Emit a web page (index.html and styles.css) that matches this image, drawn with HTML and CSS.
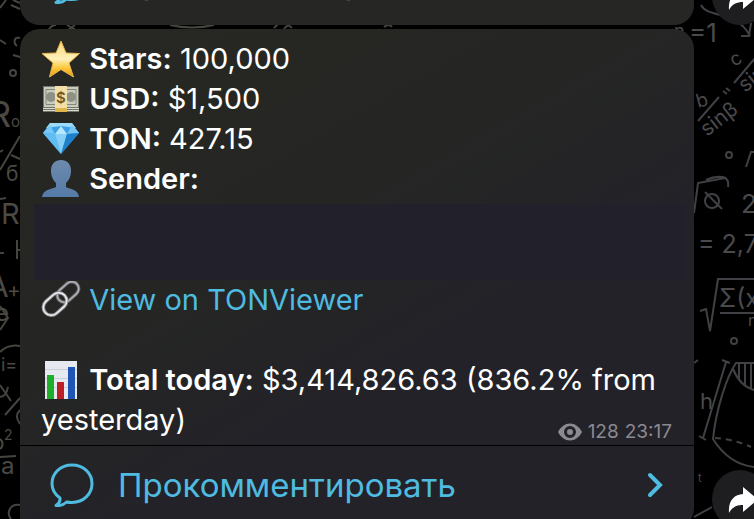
FILE: index.html
```html
<!DOCTYPE html>
<html lang="ru">
<head>
    <meta charset="UTF-8">
    <meta name="viewport" content="width=device-width, initial-scale=1.0">
    <title>Channel</title>
    <link rel="stylesheet" href="styles.css">
</head>
<body>
    <!-- wallpaper -->
    <svg class="doodles doodles-left" width="420" height="519" viewBox="0 0 420 519" aria-hidden="true">
        <path d="M0 8L6 0M11 5l9 4M13 0l7 3M0 40l6 4M20 38c-6-2-7 5-3 8M13 55l7 2M49 29q3-4 7-4M67 25l9 5M75 25l-7 5"/>
        <path d="M170 25q22 5 44 0M274 28l4-4M284 29q4-6 8-1M384 27q5-4 8 0"/>
        <circle cx="13" cy="73" r="3"/>
        <path d="M0 170L20 136M11 155l9 4M0 152l3-2M0 199l6-1M0 253h4M17 240v19M17 250h4"/>
        <path d="M0 330l8-12-8-12M0 352q8-8 20-6M0 385l11 16M0 397q6 0 8-10M5 415l15-17M20 410q-6 6 0 14M0 457l16-1"/>
        <path d="M20 505c-10-2-14 8-9 14"/>
        <text x="-12" y="127" font-size="36">R</text>
        <text x="11" y="127" font-size="15">o</text>
        <text x="6" y="181" font-size="21">б</text>
        <text x="1" y="224" font-size="29">R</text>
        <text x="-12" y="297" font-size="30">A</text>
        <text x="7" y="297" font-size="21">+</text>
        <text x="-5" y="321" font-size="24">e</text>
        <text x="1" y="371" font-size="18">i=</text>
        <text x="-9" y="450" font-size="22">b</text>
        <text x="4" y="440" font-size="14">2</text>
        <text x="1" y="474" font-size="24">a</text>
    </svg>
    <svg class="doodles doodles-right" width="80" height="519" viewBox="674 0 80 519" aria-hidden="true">
        <path d="M701 5c7 14 35 4 49 31M741 36l8 0 2-13M734 83l22-26M698 121l21-24M723 91l4 3M726 88l4 3M746 167l5-15h4M706 180q11-5 20-2"/>
        <path d="M694 213l4-30 27-5q4 2 3 9M700 311l6-2 4 22 8-52h36M720 313h34"/>
        <circle cx="729" cy="155" r="3"/>
        <circle cx="734" cy="341" r="3"/>
        <path d="M722 360l8 3M726 362l-23 76M699 436l7 4M754 363h-18c-9 13-20 46-23 76 10 16 24 26 41 28M733 369q7 17 21 21M739 363v16M745 363v22M751 363v26"/>
        <path stroke-dasharray="6 5" d="M715 438q18 1 36 9"/>
        <path d="M694 517l18-10M694 363l4-3"/>
        <circle cx="712" cy="201" r="7"/>
        <path d="M705 192l17 17"/>
        <text x="674" y="37" font-size="18">n</text>
        <text x="689" y="42" font-size="26">=1</text>
        <text x="698" y="108" font-size="19" transform="rotate(-15 698 108)">b</text>
        <text x="707" y="137" font-size="21" transform="rotate(-38 707 137)">sinβ</text>
        <text x="734" y="67" font-size="19" transform="rotate(-30 734 67)">c</text>
        <text x="745" y="93" font-size="21" transform="rotate(-38 745 93)">sin</text>
        <text x="741" y="213" font-size="26">2</text>
        <text x="698" y="253" font-size="25">= 2,7</text>
        <text x="719" y="307" font-size="25">Σ(x</text>
        <text x="748" y="326" font-size="16">n</text>
        <text x="700" y="409" font-size="22">h</text>
        <text x="698" y="482" font-size="11">t</text>
    </svg>

    <main class="chat">
        <div class="row">
            <article class="bubble">
                <a href="#comments-prev" class="comments">
                    <svg class="comments-icon" width="46" height="44" viewBox="0 0 46 44" aria-hidden="true">
                        <path d="M23 2C11.500 2 3 10 3 20.500c0 6 3 11 8 14.500.500 3-1 5.500-4 7.500 5 .500 8-1 10.500-3.500 2 .500 3.500.500 5.500.500 11.500 0 20-8.500 20-19S34.500 2 23 2z"/>
                    </svg>
                    <span>Прокомментировать</span>
                    <svg class="chevron" width="18" height="26" viewBox="0 0 18 26" aria-hidden="true"><path d="M4 3l10 10L4 23"/></svg>
                </a>
            </article>
            <button class="share" type="button" aria-label="Поделиться">
                <svg width="32" height="28" viewBox="0 0 32 28" aria-hidden="true"><path d="M15 1L30 13.500 15 26v-7C9 19 4 21 1 27 0 15 6 8.500 15 8z"/></svg>
            </button>
        </div>

        <div class="row">
            <article class="bubble bubble-last">
                <div class="message">
                    <p>
                        <svg class="emoji" width="40" height="38" viewBox="0 0 40 38" aria-hidden="true">
                            <defs>
                                <linearGradient id="gold" x1="0" y1="0" x2="0" y2="1">
                                    <stop offset="0" stop-color="#f6d67a"/>
                                    <stop offset=".5" stop-color="#fff0b8"/>
                                    <stop offset=".75" stop-color="#fbc83a"/>
                                    <stop offset="1" stop-color="#ee9a12"/>
                                </linearGradient>
                            </defs>
                            <path fill="url(#gold)" stroke="#e8b64e" stroke-width="1" stroke-linejoin="round" d="M20 1l5 12 13.500.500L28 23 32.500 37 20 29.500 8.500 37 12 23 1 13.500 15 13z"/>
                        </svg>
                        <b>Stars:</b> 100,000
                    </p>
                    <p>
                        <svg class="emoji" width="40" height="38" viewBox="0 0 40 38" aria-hidden="true">
                            <path fill="#73746a" d="M2 6h36v26H2z"/>
                            <path fill="#c9cbbd" d="M3 7h34v20H3z"/>
                            <path fill="none" stroke="#85877a" d="M5 9.500h30v15H5z"/>
                            <circle cx="10" cy="17" r="5" fill="#8d9084"/>
                            <circle cx="30" cy="17" r="5" fill="#8d9084"/>
                            <path stroke="#d8d9ce" d="M2 28.500h36M2 30.500h36"/>
                            <path fill="#f2dfa6" d="M14 6h12v22H14z"/>
                            <path fill="#dfb74e" d="M14 28h12v4H14z"/>
                            <text class="bill" x="20" y="23" text-anchor="middle">$</text>
                        </svg>
                        <b>USD:</b> $1,500
                    </p>
                    <p>
                        <svg class="emoji" width="40" height="38" viewBox="0 0 40 38" aria-hidden="true">
                            <path fill="#3da0e6" d="M9 3h22l7 10-18 21L2 13z"/>
                            <path fill="#9bdcfa" d="M9 3h22l4 5-15-2L5 8z"/>
                            <path fill="#78c8f5" d="M2 13l7-8 5 9zM31 5l7 8-12 1z"/>
                            <path fill="#b5e8fd" d="M14 14l6-8 6 8z"/>
                            <path fill="#62bdf2" d="M2 13l12 1 6 20z"/>
                            <path fill="#86d0f8" d="M14 14h12l-6 20z"/>
                            <path fill="#1e7fcb" d="M26 14l12-1-18 21z"/>
                        </svg>
                        <b>TON:</b> 427.15
                    </p>
                    <p>
                        <svg class="emoji" width="40" height="38" viewBox="0 0 40 38" aria-hidden="true">
                            <defs>
                                <linearGradient id="steel" x1="0" y1="0" x2="0" y2="1">
                                    <stop offset="0" stop-color="#6d8aac"/>
                                    <stop offset="1" stop-color="#557ba8"/>
                                </linearGradient>
                            </defs>
                            <path fill="url(#steel)" d="M20 0c7 0 10.500 5 10 12-.500 6-3 9-5 11v4c3 2 12 2 13 10H1C2 29 12 29 15 27v-4c-2-2-4.500-5-5-11C9.500 5 13 0 20 0z"/>
                        </svg>
                        <b>Sender:</b>
                    </p>
                    <div class="hidden-sender"></div>
                    <p>
                        <svg class="emoji" width="40" height="38" viewBox="0 0 40 38" aria-hidden="true">
                            <g fill="none">
                                <g transform="rotate(-42 27 11)">
                                    <rect x="15" y="4" width="24" height="14" rx="7" stroke="#66666b" stroke-width="3.500"/>
                                    <rect x="15" y="4" width="24" height="14" rx="7" stroke="#b4b4b9" stroke-width="1.500"/>
                                </g>
                                <g transform="rotate(-42 14 23)">
                                    <rect x="1" y="15" width="26" height="16" rx="8" stroke="#8d8d92" stroke-width="3.500"/>
                                    <rect x="1" y="15" width="26" height="16" rx="8" stroke="#f0f0f4" stroke-width="1.500"/>
                                </g>
                            </g>
                        </svg>
                        <a href="#tonviewer">View on TONViewer</a>
                    </p>
                    <p><br></p>
                    <p>
                        <svg class="emoji" width="40" height="38" viewBox="0 0 40 38" aria-hidden="true">
                            <path fill="#e6eaf0" d="M4 0h32v38H4z"/>
                            <path stroke="#c9d0da" d="M4 8.500h32M4 17.500h32M4 26.500h32"/>
                            <path fill="#1fae2c" d="M6 14h7v24H6z"/>
                            <path fill="#bd1f26" d="M16 21h7v17h-7z"/>
                            <path fill="#1f56b5" d="M27 6h7v32h-7z"/>
                        </svg>
                        <b>Total today:</b> $3,414,826.63 (836.2% from yesterday)
                    </p>
                    <div class="meta">
                        <svg width="24" height="18" viewBox="0 0 24 18" aria-hidden="true">
                            <path fill="currentColor" fill-rule="evenodd" d="M0 9C3 3.500 7 .500 12 .500S21 3.500 24 9c-3 5.500-7 8.500-12 8.500S3 14.500 0 9zm12-6a6 6 0 1 0 0 12 6 6 0 0 0 0-12z"/>
                            <circle cx="12" cy="9" r="3" fill="currentColor"/>
                        </svg>
                        <span>128</span>
                        <time>23:17</time>
                    </div>
                </div>
                <a href="#comments" class="comments">
                    <svg class="comments-icon" width="46" height="44" viewBox="0 0 46 44" aria-hidden="true">
                        <path d="M23 2C11.500 2 3 10 3 20.500c0 6 3 11 8 14.500.500 3-1 5.500-4 7.500 5 .500 8-1 10.500-3.500 2 .500 3.500.500 5.500.500 11.500 0 20-8.500 20-19S34.500 2 23 2z"/>
                    </svg>
                    <span>Прокомментировать</span>
                    <svg class="chevron" width="18" height="26" viewBox="0 0 18 26" aria-hidden="true"><path d="M4 3l10 10L4 23"/></svg>
                </a>
            </article>
            <button class="share" type="button" aria-label="Поделиться">
                <svg width="32" height="28" viewBox="0 0 32 28" aria-hidden="true"><path d="M15 1L30 13.500 15 26v-7C9 19 4 21 1 27 0 15 6 8.500 15 8z"/></svg>
            </button>
        </div>
    </main>
</body>
</html>
```

FILE: styles.css
```css
* { box-sizing: border-box; }
body { margin: 0; height: 100vh; overflow: hidden; position: relative; background-color: #000; color: #fff; font-family: Inter, "Liberation Sans", sans-serif; font-size: 29px; line-height: 40px; }

/* wallpaper */
.doodles { position: absolute; top: 0; fill: none; stroke: #45443f; stroke-width: 2; }
.doodles text { fill: #4a4943; stroke: none; font-family: Inter, sans-serif; font-weight: 400; }
.doodles-left { left: 0; }
.doodles-right { right: 0; stroke: #414145; }
.doodles-right text { fill: #4a4a4d; }

/* messages, scrolled so the first one is cut by the top edge */
.chat { position: relative; display: flex; flex-direction: column; gap: 4px; margin-top: -58px; padding-left: 20px; }
.row { display: flex; align-items: flex-end; gap: 18px; margin-right: -14px; }
.bubble { flex: 1; min-width: 0; border-radius: 20px; overflow: hidden; background-color: #262724; }
.bubble-last { border-bottom-left-radius: 0; background: linear-gradient(150deg, #272822 0%, #252624 40%, #232229 65%, #232229 100%); }
.message { position: relative; padding: 10px 14px 5px 21px; }
.message p { margin: 0; }
.message b { font-weight: 600; }
.message a { color: #4fbbe0; text-decoration: none; }
.emoji { display: inline-block; vertical-align: middle; margin: -4px 0 0; }
.bill { font-size: 15px; font-weight: 600; fill: #6b5a2a; }
.hidden-sender { height: 76px; margin: 5px -6px 0 -7px; background-color: #22202a; }
.meta { position: absolute; right: 22px; bottom: 1px; display: flex; align-items: center; gap: 6px; height: 24px; font-size: 19px; line-height: 24px; color: #8b8a91; }

.comments { display: flex; align-items: center; height: 83px; padding: 0 30px 4px 29px; border-top: 1px solid #000; color: #4fbbe0; font-size: 33px; text-decoration: none; }
.comments span { flex: 1; margin-left: 23px; }
.comments-icon { fill: none; stroke: #4fbbe0; stroke-width: 3; stroke-linejoin: round; }
.chevron { fill: none; stroke: #4fbbe0; stroke-width: 4; stroke-linecap: round; }

.share { flex: none; display: flex; align-items: center; justify-content: center; width: 56px; height: 58px; padding: 2px 0 0 8px; border: 0; border-radius: 50%; background-color: #1e1e20; cursor: pointer; }
.share svg { fill: #fff; }
```
